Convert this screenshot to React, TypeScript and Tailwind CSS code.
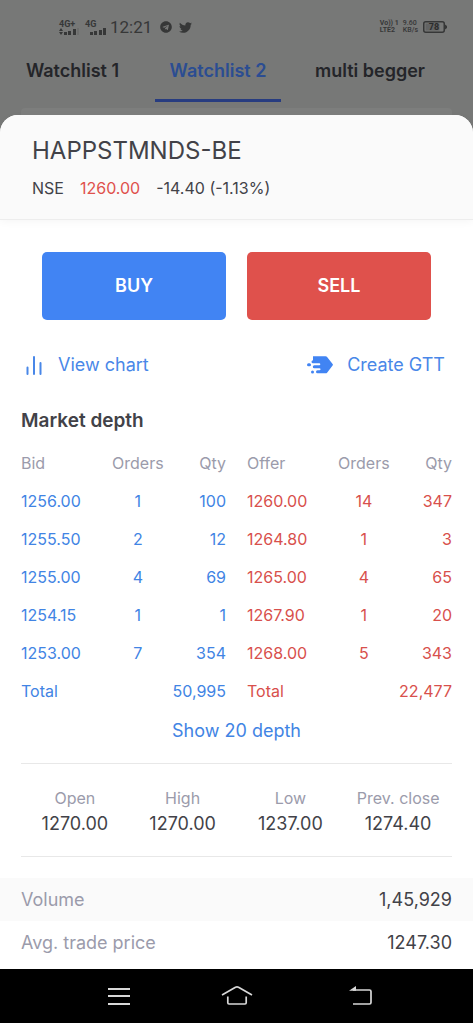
import { FaTelegram, FaTwitter } from "react-icons/fa";

type Level = { price: string; orders: string; qty: string };

const bids: Level[] = [
  { price: "1256.00", orders: "1", qty: "100" },
  { price: "1255.50", orders: "2", qty: "12" },
  { price: "1255.00", orders: "4", qty: "69" },
  { price: "1254.15", orders: "1", qty: "1" },
  { price: "1253.00", orders: "7", qty: "354" },
];

const offers: Level[] = [
  { price: "1260.00", orders: "14", qty: "347" },
  { price: "1264.80", orders: "1", qty: "3" },
  { price: "1265.00", orders: "4", qty: "65" },
  { price: "1267.90", orders: "1", qty: "20" },
  { price: "1268.00", orders: "5", qty: "343" },
];

const ohlc = [
  { label: "Open", value: "1270.00" },
  { label: "High", value: "1270.00" },
  { label: "Low", value: "1237.00" },
  { label: "Prev. close", value: "1274.40" },
];

const tabs = ["Watchlist 1", "Watchlist 2", "multi begger"];

function Signal({ label, arrows }: { label: string; arrows?: boolean }) {
  return (
    <span className="flex flex-col items-start">
      <span className="text-[9px] leading-[8px] font-bold">{label}</span>
      <svg width="21" height="7" viewBox="0 0 21 7" fill="currentColor" aria-hidden="true">
        {arrows ? (
          <>
            <path d="M0 3l2-3 2 3zM0 4l2 3 2-3z" />
            <path d="M5 4h3v3H5zM9 3h3v4H9zM14 1h3v6h-3z" />
            <path d="M18 0h2v7h-2z" opacity=".15" />
          </>
        ) : (
          <path d="M5 4h3v3H5zM9 3h3v4H9zM14 2h3v5h-3zM18 0h3v7h-3z" />
        )}
      </svg>
    </span>
  );
}

function StatusBar() {
  return (
    <div className="flex h-[54px] items-center justify-between pr-[26px] pl-[59px] font-['Roboto',sans-serif] text-[#363737]">
      <div className="flex items-center">
        <Signal label="4G+" arrows />
        <span className="w-[5px]" />
        <Signal label="4G" />
        <span className="ml-1 text-[17px] leading-5">12:21</span>
        <FaTelegram className="ml-2 size-3" aria-label="Telegram" />
        <FaTwitter className="ml-[7px] size-[13px]" aria-label="Twitter" />
      </div>
      <div className="flex items-center">
        <span className="text-[7px] leading-[7px] font-bold">
          Vo)) 1<br />
          LTE2
        </span>
        <span className="ml-1 text-[7px] leading-[7px] font-medium">
          9.60
          <br />
          KB/s
        </span>
        <svg className="ml-[5px]" width="24" height="12" viewBox="0 0 24 12" aria-label="Battery">
          <rect x=".75" y=".75" width="20.5" height="10.5" rx="2" fill="none" stroke="currentColor" strokeWidth="1.5" />
          <path d="M22 3.5l2 1.5v2l-2 1.5z" fill="currentColor" />
          <rect x="2.5" y="2.5" width="14" height="7" fill="#626363" />
          <text x="11" y="9" textAnchor="middle" fontSize="9" fontWeight="700" fill="#2b2c2c">
            78
          </text>
        </svg>
      </div>
    </div>
  );
}

function Depth({ side, levels, total, color }: { side: string; levels: Level[]; total: string; color: string }) {
  return (
    <table className="w-full table-fixed text-base leading-6">
      <colgroup>
        <col className="w-[38%]" />
        <col className="w-[38%]" />
        <col />
      </colgroup>
      <thead>
        <tr className="h-[38px] text-[#9b9bab]">
          <th className="p-0 text-left font-normal">{side}</th>
          <th className="p-0 text-center font-normal">Orders</th>
          <th className="p-0 text-right font-normal">Qty</th>
        </tr>
      </thead>
      <tbody className={color}>
        {levels.map((l) => (
          <tr key={l.price} className="h-[38px]">
            <td className="p-0">{l.price}</td>
            <td className="p-0 text-center">{l.orders}</td>
            <td className="p-0 text-right">{l.qty}</td>
          </tr>
        ))}
      </tbody>
      <tfoot className={color}>
        <tr className="h-[38px]">
          <td className="p-0">Total</td>
          <td className="p-0 text-right" colSpan={2}>
            {total}
          </td>
        </tr>
      </tfoot>
    </table>
  );
}

export default function App() {
  return (
    <div className="flex min-h-screen flex-col bg-[#777877] font-['Inter',sans-serif] text-[#424248]">
      <StatusBar />
      <nav className="flex h-12 gap-[34px] overflow-hidden pl-6 text-lg leading-6 font-semibold whitespace-nowrap">
        {tabs.map((tab) => (
          <button
            key={tab}
            className={
              tab === "Watchlist 2"
                ? "w-[126px] shrink-0 border-b-3 border-[#273c80] pb-[11px] text-[#2b4d92]"
                : "min-w-[97px] shrink-0 pb-[14px] text-[#242529]"
            }
          >
            {tab}
          </button>
        ))}
      </nav>
      <div className="mx-[21px] mt-[6px] h-[7px] rounded-t-sm bg-[#7d7e7d]" />

      <main className="flex flex-1 flex-col rounded-t-[18px] bg-white">
        <header className="rounded-t-[18px] border-b border-[#ededed] bg-[#fafafa] px-8 pt-5 pb-[19px] shadow-[0_2px_8px_rgba(0,0,0,0.04)]">
          <h1 className="text-2xl leading-8 font-normal">HAPPSTMNDS-BE</h1>
          <p className="mt-[9px] flex gap-4 text-base leading-6">
            <span>NSE</span>
            <span className="text-[#df514c]">1260.00</span>
            <span>-14.40 (-1.13%)</span>
          </p>
        </header>

        <div className="mt-8 grid grid-cols-2 gap-[21px] px-[42px] text-lg font-semibold text-white">
          <button className="h-[68px] rounded-[5px] bg-[#4184f3]">BUY</button>
          <button className="h-[68px] rounded-[5px] bg-[#df514c]">SELL</button>
        </div>

        <div className="mt-[33px] flex justify-between pr-7 pl-[25px] text-lg leading-6 text-[#4987e8]">
          <button className="flex items-center">
            <svg width="18" height="22" viewBox="0 0 18 22" fill="none" stroke="currentColor" strokeWidth="2" strokeLinecap="round" aria-hidden="true">
              <path d="M2.5 13.500v6.500M9 3v17M15.500 9V20" />
            </svg>
            <span className="ml-[15px]">View chart</span>
          </button>
          <button className="flex items-center">
            <svg width="28" height="18" viewBox="0 0 28 18" aria-hidden="true">
              <path
                fill="#4184f3"
                d="M7 .5h12.500c.8 0 1.300.3 1.800.9l5.300 6.700c.5.600.5 1.100 0 1.700l-5.300 6.800c-.5.600-1 .9-1.800.9H11.500a1.500 1.500 0 0 1 0-3h2a1 1 0 0 0 0-2H8.300a1.500 1.500 0 0 1 0-3h5a1 1 0 0 0 0-2H7a1.500 1.500 0 0 1 0-3z"
                transform="translate(0 -.2)"
              />
              <rect x="1" y="7.300" width="4" height="3" rx="1.500" fill="#4184f3" />
              <circle cx="6.500" cy="16" r="1.500" fill="#4184f3" />
            </svg>
            <span className="ml-[13px]">Create GTT</span>
          </button>
        </div>

        <section className="px-[21px]">
          <h2 className="mt-8 text-[19px] leading-6 font-semibold">Market depth</h2>
          <div className="mt-[11px] grid grid-cols-2 gap-[21px]">
            <Depth side="Bid" levels={bids} total="50,995" color="text-[#4184e4]" />
            <Depth side="Offer" levels={offers} total="22,477" color="text-[#d8504c]" />
          </div>
          <button className="mx-auto mt-[9px] block text-lg leading-6 text-[#4184e4]">Show 20 depth</button>

          <dl className="mt-5 grid grid-cols-4 border-y border-[#e8e8e8] pt-[22px] pb-5 text-center">
            {ohlc.map((o) => (
              <div key={o.label}>
                <dt className="text-base leading-6 whitespace-nowrap text-[#9b9bab]">{o.label}</dt>
                <dd className="mt-[2px] text-lg leading-6">{o.value}</dd>
              </div>
            ))}
          </dl>
        </section>

        <dl className="mt-[21px] pb-[3px] text-lg leading-6">
          <div className="flex h-[43px] items-center justify-between bg-[#fafafa] px-[21px]">
            <dt className="text-[#9b9bab]">Volume</dt>
            <dd>1,45,929</dd>
          </div>
          <div className="flex h-[43px] items-center justify-between px-[21px]">
            <dt className="text-[#9b9bab]">Avg. trade price</dt>
            <dd>1247.30</dd>
          </div>
        </dl>
      </main>

      <footer className="grid h-[55px] grid-cols-[1fr_80px_1fr] items-center border-b border-white bg-black text-[#d8d8d8]">
        <button className="justify-self-end pr-[66px]" aria-label="Recent apps">
          <svg width="24" height="20" viewBox="0 0 24 20" fill="none" stroke="currentColor" strokeWidth="2">
            <path d="M1 3h22M1 10h22M1 18h22" />
          </svg>
        </button>
        <button className="justify-self-center" aria-label="Home">
          <svg width="32" height="22" viewBox="0 0 32 22" fill="none" stroke="currentColor" strokeWidth="1.700" strokeLinejoin="round">
            <path d="M1 10L14.500 2.300q1.500-.8 3 0L31 10M6.800 11.500v6.300q0 1.200 1.200 1.200h16q1.200 0 1.200-1.200v-6.300" />
          </svg>
        </button>
        <button className="justify-self-start pl-[72px]" aria-label="Back">
          <svg width="24" height="20" viewBox="0 0 24 20" fill="none" stroke="currentColor" strokeWidth="1.700">
            <path d="M4 4h16.500q1.500 0 1.500 1.500v11q0 1.500-1.500 1.500H4" />
            <path d="M0 4.800L7 0v4.800z" fill="currentColor" stroke="none" />
          </svg>
        </button>
      </footer>
    </div>
  );
}
